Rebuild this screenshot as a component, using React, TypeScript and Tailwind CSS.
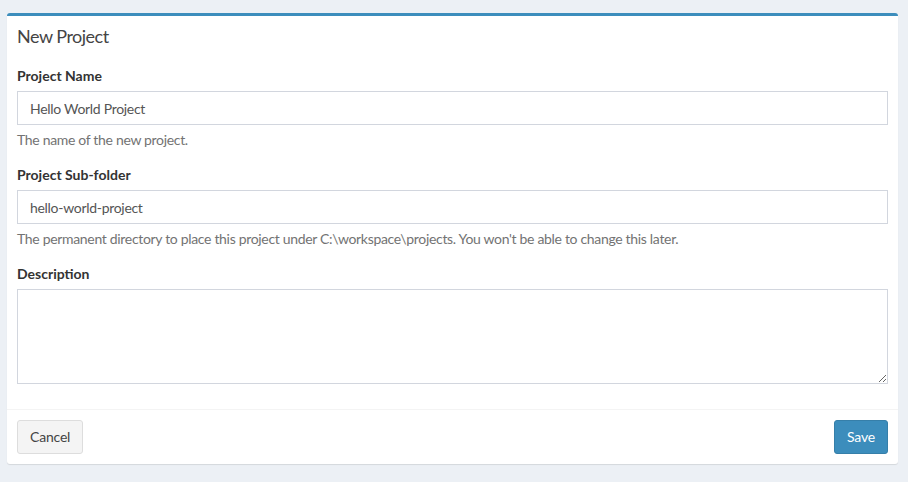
import React from 'react';

const inputClass =
    'block w-full h-[34px] px-3 py-1.5 text-sm tracking-[-0.3px] text-[#555] bg-white border border-[#d2d6de] outline-none';

function Field({ label, help, children }: { label: string; help?: string; children: React.ReactNode }) {
    return (
        <div className="mb-[15px]">
            <label className="block mb-[5px] text-sm leading-5 font-bold text-[#333]">{label}</label>
            {children}
            {help && (
                <p className="mt-[5px] mb-[10px] text-sm leading-5 tracking-[-0.32px] text-[#737373]">{help}</p>
            )}
        </div>
    );
}

export default function App() {
    return (
        <div
            className="min-h-screen bg-[#ecf0f5] pt-[13px] pl-[7px] pr-[10px]"
            style={{ fontFamily: 'Lato, "Liberation Sans", sans-serif' }}
        >
            {/* New project box */}
            <div className="bg-white border-t-[3px] border-[#3c8dbc] rounded-[3px] shadow-[0_1px_1px_rgba(0,0,0,0.1)]">
                <div className="p-[10px]">
                    <h3 className="text-lg leading-5 tracking-[-0.5px] text-[#444]">New Project</h3>
                </div>

                <div className="px-[10px] pt-[10px] pb-[10px]">
                    <Field label="Project Name" help="The name of the new project.">
                        <input className={inputClass} defaultValue="Hello World Project" />
                    </Field>
                    <Field
                        label="Project Sub-folder"
                        help="The permanent directory to place this project under C:\workspace\projects. You won't be able to change this later."
                    >
                        <input className={inputClass} defaultValue="hello-world-project" />
                    </Field>
                    <Field label="Description">
                        <textarea className="block w-full h-[95px] px-3 py-1.5 text-sm text-[#555] border border-[#d2d6de] outline-none" />
                    </Field>
                </div>

                <div className="flex justify-between border-t border-[#f4f4f4] p-[10px]">
                    <button className="h-[34px] px-3 text-sm tracking-[-0.2px] text-[#444] bg-[#f4f4f4] border border-[#ddd] rounded-[3px]">
                        Cancel
                    </button>
                    <button className="h-[34px] px-3 text-sm tracking-[-0.2px] text-white bg-[#3c8dbc] border border-[#367fa9] rounded-[3px]">
                        Save
                    </button>
                </div>
            </div>
        </div>
    );
}
